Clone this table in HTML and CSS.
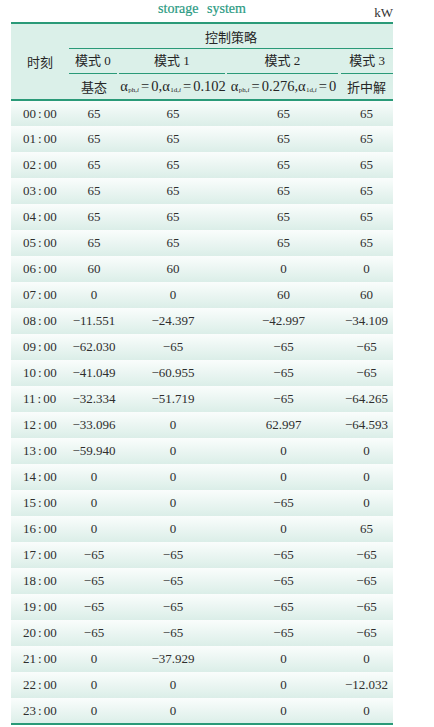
FILE: index.html
```html
<!DOCTYPE html>
<html lang="zh">
<head>
<meta charset="utf-8">
<link rel="stylesheet" href="styles.css">
</head>
<body>
<div class="page">
  <div class="caption">
    <span></span>
    <span class="cap-title">storage system</span>
    <span class="unit">kW</span>
  </div>
  <table class="tbl">
    <colgroup>
      <col class="c0"><col class="c1"><col class="c2"><col class="c3"><col class="c4">
    </colgroup>
    <thead>
      <tr class="h1">
        <th rowspan="3" class="time-h">时刻</th>
        <th colspan="4" class="strategy">控制策略</th>
      </tr>
      <tr class="h2">
        <th><div class="seg s1">模式 0</div></th>
        <th><div class="seg s2">模式 1</div></th>
        <th><div class="seg s3">模式 2</div></th>
        <th><div class="seg s4">模式 3</div></th>
      </tr>
      <tr class="h3">
        <th>基态</th>
        <th class="f"><i>α</i><sub>ph,<i>i</i></sub><span class="eq">=</span>0,<i>α</i><sub>1d,<i>i</i></sub><span class="eq">=</span>0.102</th>
        <th class="f"><i>α</i><sub>ph,<i>i</i></sub><span class="eq">=</span>0.276,<i>α</i><sub>1d,<i>i</i></sub><span class="eq">=</span>0</th>
        <th>折中解</th>
      </tr>
    </thead>
    <tbody>
      <tr><td>00<span class="col">:</span>00</td><td>65</td><td>65</td><td>65</td><td>65</td></tr>
      <tr><td>01<span class="col">:</span>00</td><td>65</td><td>65</td><td>65</td><td>65</td></tr>
      <tr><td>02<span class="col">:</span>00</td><td>65</td><td>65</td><td>65</td><td>65</td></tr>
      <tr><td>03<span class="col">:</span>00</td><td>65</td><td>65</td><td>65</td><td>65</td></tr>
      <tr><td>04<span class="col">:</span>00</td><td>65</td><td>65</td><td>65</td><td>65</td></tr>
      <tr><td>05<span class="col">:</span>00</td><td>65</td><td>65</td><td>65</td><td>65</td></tr>
      <tr><td>06<span class="col">:</span>00</td><td>60</td><td>60</td><td>0</td><td>0</td></tr>
      <tr><td>07<span class="col">:</span>00</td><td>0</td><td>0</td><td>60</td><td>60</td></tr>
      <tr><td>08<span class="col">:</span>00</td><td>−11.551</td><td>−24.397</td><td>−42.997</td><td>−34.109</td></tr>
      <tr><td>09<span class="col">:</span>00</td><td>−62.030</td><td>−65</td><td>−65</td><td>−65</td></tr>
      <tr><td>10<span class="col">:</span>00</td><td>−41.049</td><td>−60.955</td><td>−65</td><td>−65</td></tr>
      <tr><td>11<span class="col">:</span>00</td><td>−32.334</td><td>−51.719</td><td>−65</td><td>−64.265</td></tr>
      <tr><td>12<span class="col">:</span>00</td><td>−33.096</td><td>0</td><td>62.997</td><td>−64.593</td></tr>
      <tr><td>13<span class="col">:</span>00</td><td>−59.940</td><td>0</td><td>0</td><td>0</td></tr>
      <tr><td>14<span class="col">:</span>00</td><td>0</td><td>0</td><td>0</td><td>0</td></tr>
      <tr><td>15<span class="col">:</span>00</td><td>0</td><td>0</td><td>−65</td><td>0</td></tr>
      <tr><td>16<span class="col">:</span>00</td><td>0</td><td>0</td><td>0</td><td>65</td></tr>
      <tr><td>17<span class="col">:</span>00</td><td>−65</td><td>−65</td><td>−65</td><td>−65</td></tr>
      <tr><td>18<span class="col">:</span>00</td><td>−65</td><td>−65</td><td>−65</td><td>−65</td></tr>
      <tr><td>19<span class="col">:</span>00</td><td>−65</td><td>−65</td><td>−65</td><td>−65</td></tr>
      <tr><td>20<span class="col">:</span>00</td><td>−65</td><td>−65</td><td>−65</td><td>−65</td></tr>
      <tr><td>21<span class="col">:</span>00</td><td>0</td><td>−37.929</td><td>0</td><td>0</td></tr>
      <tr><td>22<span class="col">:</span>00</td><td>0</td><td>0</td><td>0</td><td>−12.032</td></tr>
      <tr><td>23<span class="col">:</span>00</td><td>0</td><td>0</td><td>0</td><td>0</td></tr>
    </tbody>
  </table>
</div>
</body>
</html>
```
FILE: styles.css
```css
html, body {
  margin: 0;
  padding: 0;
  background: #ffffff;
}
body {
  font-family: "Liberation Serif", "Noto Sans CJK SC", serif;
  color: #2a2a2a;
}
.page {
  padding-left: 11px;
  width: 382px;
}
.caption {
  display: grid;
  grid-template-columns: 1fr auto 1fr;
  height: 22px;
}
.cap-title {
  color: #2a9a82;
  font-size: 14px;
  line-height: 14px;
  padding-top: 2px;
  word-spacing: 5px;
  font-weight: normal;
  -webkit-text-stroke: 0.2px #2a9a82;
}
.unit {
  justify-self: end;
  font-size: 13px;
  line-height: 13px;
  padding-top: 6px;
  color: #333;
}
.tbl {
  border-collapse: collapse;
  table-layout: fixed;
  width: 382px;
  border-top: 2px solid #2a9a78;
  border-bottom: 2px solid #2a9a78;
}
.c0 { width: 58px; }
.c1 { width: 50px; }
.c2 { width: 108px; }
.c3 { width: 113px; }
.c4 { width: 53px; }
thead {
  background: #dbf0e9;
  border-bottom: 2px solid #2a9a78;
}
th {
  font-weight: normal;
  padding: 0;
  font-size: 13px;
  font-family: "Liberation Serif", "Noto Sans CJK SC", serif;
  text-align: center;
  white-space: nowrap;
  color: #262626;
}
.time-h {
  font-family: "Noto Sans CJK SC", sans-serif;
}
.h1 th { height: 24px; }
.strategy {
  border-bottom: 1px solid #2a9a78;
  font-family: "Noto Sans CJK SC", sans-serif;
}
.h2 th { height: 25px; vertical-align: bottom; }
.seg {
  height: 24px;
  line-height: 24px;
  border-bottom: 1px solid #2a9a78;
}
.s1, .s2, .s3 { margin-right: 2px; }
.s4 { margin-left: 1px; }
.h3 th { height: 25px; }
.f {
  font-size: 14.5px;
  letter-spacing: 0;
}
.f i { font-style: normal; font-family: "Liberation Serif", serif; }
.f sub {
  font-size: 7px;
  vertical-align: -1px;
  margin-left: 0.5px;
}
.f sub i { font-style: italic; }
.eq { margin: 0 2px; }
tbody tr {
  height: 26px;
  background: linear-gradient(#fafdfc, #dbeee8);
}
td {
  padding: 0;
  font-size: 13px;
  text-align: center;
  white-space: nowrap;
  color: #2e2e2e;
}
td:first-child {
  text-align: left;
  padding-left: 12px;
}
.col { margin: 0 2px; }
```
